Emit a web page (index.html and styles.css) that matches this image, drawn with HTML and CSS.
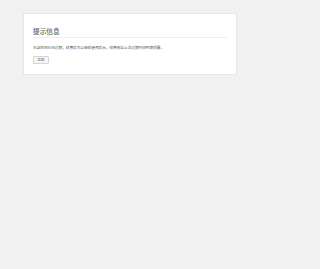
FILE: index.html
```html
<!DOCTYPE html>
<html lang="zh-CN">
<head>
<meta charset="utf-8">
<title>提示信息</title>
<link rel="stylesheet" href="styles.css">
</head>
<body>
<div class="error-page">
  <h1 class="title">提示信息</h1>
  <p class="message">本站空间已经过期，续费后可以继续使用后台，续费网址上次过期时间到期提醒。</p>
  <p class="actions"><a class="button" href="#">返回</a></p>
</div>
</body>
</html>
```
FILE: styles.css
```css
html {
  background: #f1f1f1;
}
body {
  margin: 0;
  font-family: "Noto Sans CJK SC", "Noto Sans", sans-serif;
}
.error-page {
  box-sizing: border-box;
  width: 214px;
  margin: 13px 0 0 23px;
  padding: 4.5px 9px;
  background: #fff;
  border: 1px solid #e6e7e8;
  box-shadow: 0 1px 1px rgba(0,0,0,.04);
  color: #444;
}
.title {
  margin: 8.4px 0 0;
  padding: 0 0 2px;
  font-size: 6.7px;
  line-height: 8px;
  font-weight: 500;
  color: #666;
  border-bottom: 1px solid #ececec;
}
.message {
  margin: 7px 0 5.6px;
  font-size: 3.65px;
  line-height: 5.9px;
  color: #555;
}
.actions {
  margin: 0 0 5.6px;
  font-size: 3.4px;
  line-height: 6px;
}
.button {
  display: inline-block;
  box-sizing: border-box;
  height: 8px;
  line-height: 6px;
  padding: 0 3.5px;
  border: 1px solid #d4d4d4;
  border-radius: 1px;
  background: #f7f7f7;
  color: #555;
  text-decoration: none;
}
```
